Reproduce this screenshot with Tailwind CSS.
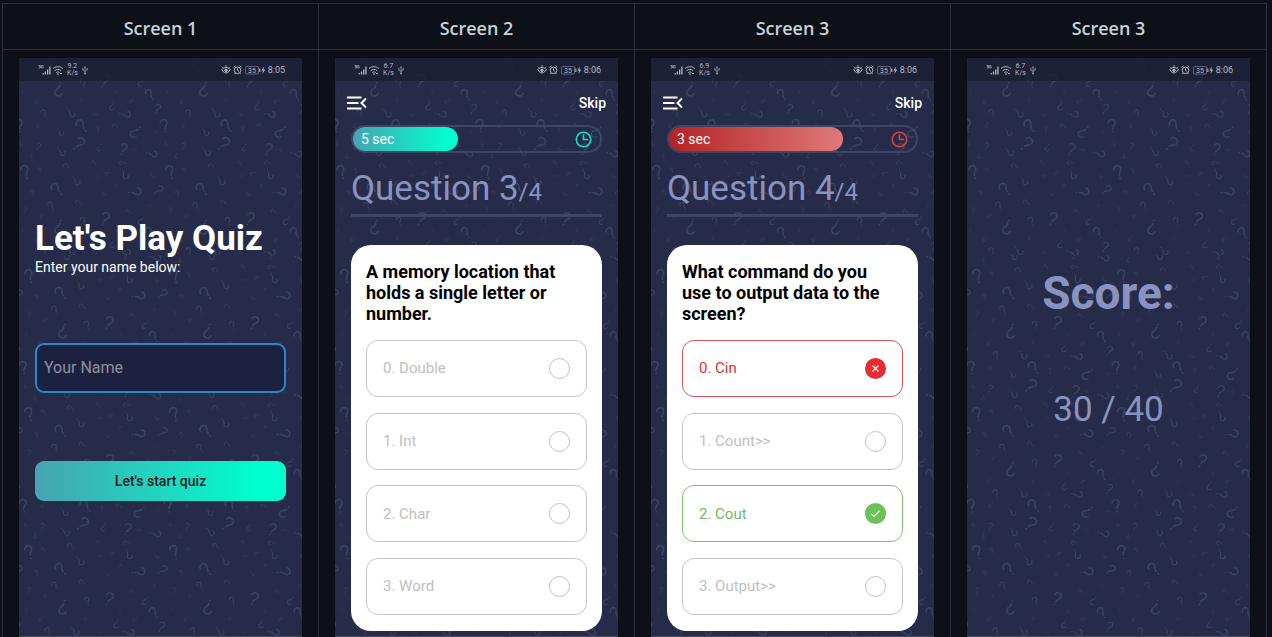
<!DOCTYPE html>
<html lang="en">
<head>
<meta charset="utf-8">
<title>Quiz app screens</title>
<script src="https://cdn.jsdelivr.net/npm/@tailwindcss/browser@4"></script>
</head>
<body class="bg-[#0d1117] pt-[3px] pr-[5px] pl-[2px] font-['Roboto',sans-serif]">

<!-- Shared symbols -->
<svg class="absolute size-0" aria-hidden="true">
  <defs>
    <path id="q" d="M-10,-11 C-7,-21 11,-20 10,-7 C9,1 -1,1 -3,10 M-5,18 l-0.5,1.5" fill="none" stroke="#3c4262" stroke-width="4.5" stroke-linecap="round"/>
    <g id="marks">
      <use href="#q" transform="translate(260,68) rotate(12)"/>
      <use href="#q" transform="translate(194,75) rotate(-30) scale(.65)"/>
      <use href="#q" transform="translate(119,94) rotate(182) scale(1.1)"/>
      <use href="#q" transform="translate(367,74) rotate(205) scale(.65)"/>
      <use href="#q" transform="translate(394,109) rotate(-45) scale(.9)"/>
      <use href="#q" transform="translate(337,130) rotate(225) scale(.4)"/>
      <use href="#q" transform="translate(417,152) rotate(12) scale(.75)"/>
      <use href="#q" transform="translate(280,144) rotate(185) scale(.65)"/>
      <use href="#q" transform="translate(54,129) rotate(205) scale(.4)"/>
      <use href="#q" transform="translate(76,166) rotate(-35) scale(.65)"/>
      <use href="#q" transform="translate(156,166) rotate(125) scale(.75)"/>
      <use href="#q" transform="translate(229,170) rotate(90) scale(.3)"/>
      <use href="#q" transform="translate(319,170) rotate(85) scale(.85)"/>
      <use href="#q" transform="translate(2,202) rotate(-20)"/>
      <use href="#q" transform="translate(438,202) rotate(-20)"/>
      <use href="#q" transform="translate(59,202) rotate(200) scale(.45)"/>
      <use href="#q" transform="translate(124,223) rotate(125) scale(.65)"/>
      <use href="#q" transform="translate(189,202) rotate(-50) scale(1.05)"/>
      <use href="#q" transform="translate(237,212) rotate(-10) scale(.45)"/>
      <use href="#q" transform="translate(289,204) rotate(-80) scale(.5)"/>
      <use href="#q" transform="translate(349,221) rotate(212)"/>
      <use href="#q" transform="translate(409,221) rotate(90) scale(.25)"/>
      <use href="#q" transform="translate(181,258) rotate(32) scale(1.1)"/>
      <use href="#q" transform="translate(6,259) rotate(150) scale(.35)"/>
      <use href="#q" transform="translate(59,265) rotate(5) scale(.55)"/>
      <use href="#q" transform="translate(241,269) rotate(190) scale(.55)"/>
      <use href="#q" transform="translate(315,273) rotate(10) scale(.9)"/>
      <use href="#q" transform="translate(347,275) rotate(85) scale(.35)"/>
      <use href="#q" transform="translate(399,288) rotate(88) scale(.85)"/>
      <use href="#q" transform="translate(127,282) rotate(120) scale(.75)"/>
      <use href="#q" transform="translate(37,294) rotate(170) scale(.4)"/>
      <use href="#q" transform="translate(226,314) rotate(-55) scale(.38)"/>
      <use href="#q" transform="translate(311,314) rotate(-100) scale(.5)"/>
      <use href="#q" transform="translate(144,324) rotate(-70) scale(.58)"/>
      <use href="#q" transform="translate(20,341) rotate(-28) scale(1.05)"/>
      <use href="#q" transform="translate(62,336) rotate(-40) scale(.4)"/>
      <use href="#q" transform="translate(317,350) rotate(140) scale(.75)"/>
      <use href="#q" transform="translate(266,346) rotate(232) scale(.42)"/>
      <use href="#q" transform="translate(232,354) rotate(80) scale(.25)"/>
      <use href="#q" transform="translate(171,369) rotate(130) scale(.75)"/>
      <use href="#q" transform="translate(402,355) rotate(130) scale(.4)"/>
      <use href="#q" transform="translate(291,383) rotate(20) scale(.28)"/>
      <use href="#q" transform="translate(114,392) rotate(-55) scale(1.05)"/>
      <use href="#q" transform="translate(41,406) rotate(-25) scale(.5)"/>
      <use href="#q" transform="translate(349,403) rotate(72)"/>
      <use href="#q" transform="translate(421,396) rotate(40) scale(.8)"/>
      <use href="#q" transform="translate(254,408) rotate(130) scale(.35)"/>
      <use href="#q" transform="translate(97,29) rotate(-45) scale(.65)"/>
      <use href="#q" transform="translate(179,19) rotate(-75) scale(.55)"/>
      <use href="#q" transform="translate(19,43) rotate(0) scale(.45)"/>
      <use href="#q" transform="translate(329,46) rotate(-75) scale(.42)"/>
      <use href="#q" transform="translate(395,29) rotate(20) scale(.2)"/>
      <use href="#q" transform="translate(67,60) rotate(220) scale(.3)"/>
      <use href="#q" transform="translate(10,103) rotate(0) scale(.2)"/>
      <use href="#q" transform="translate(292,105) rotate(0) scale(.22)"/>
      <use href="#q" transform="translate(186,129) rotate(10) scale(.25)"/>
    </g>
    <pattern id="tile" width="145" height="138" viewBox="0 0 436 414" preserveAspectRatio="none" patternUnits="userSpaceOnUse"><use href="#marks"/></pattern>
    <pattern id="tile-low" x="4" y="104" width="145" height="138" viewBox="0 0 436 414" preserveAspectRatio="none" patternUnits="userSpaceOnUse"><use href="#marks"/></pattern>
    <symbol id="backdrop">
      <rect width="100%" height="197" fill="url(#tile)"/>
      <rect y="197" width="100%" height="100%" fill="url(#tile-low)"/>
    </symbol>
    <symbol id="net" viewBox="0 0 26 12">
      <path d="M0.500 1.500h2v1.200h-1.200h1.200v1.200h-2M5.300 1.500h-1.700v2.400h1.700v-1.200h-.8" fill="none" stroke="#a9adba" stroke-width=".7"/>
      <path d="M5.300 10.500v-1.500M7.500 10.500v-3M9.700 10.500v-5M11.900 10.500v-8" stroke="#b4b7c2" stroke-width="1.300" fill="none"/>
      <path d="M15 4.500c2.800-2.400 7-2.400 9.800 0M16.600 6.600c2-1.600 4.600-1.600 6.600 0M18.200 8.500c1-.8 2.400-.8 3.400 0" fill="none" stroke="#b4b7c2" stroke-width="1"/>
      <path d="M19 10h2M22 9.500h2" stroke="#b4b7c2" stroke-width="1.200"/>
    </symbol>
    <symbol id="usb" viewBox="0 0 8 12">
      <path d="M4 3v7M1.800 5v1.200l2.200 1.300l2.200-1.300v-1.200" fill="none" stroke="#9397a6" stroke-width=".8"/>
      <path d="M2.900 3.500l1.100-1.800l1.100 1.800zM1.200 4.200h1.300v1.300h-1.300zM5.500 4.200h1.300v1.300h-1.300z" fill="#9397a6"/><circle cx="4" cy="9.500" r=".9" fill="#9397a6"/>
    </symbol>
    <symbol id="tray" viewBox="0 0 45 12">
      <g fill="none" stroke="#b4b7c2" stroke-width="1">
        <path d="M.8 5.500c2-2.600 6.400-2.600 8.400 0M.8 5.500c2 4.600 6.400 4.600 8.400 0M2 3.800l-1-1M8 3.800l1-1M5 3v-1.600"/><circle cx="5" cy="6.300" r="1.200" fill="#b4b7c2"/>
        <circle cx="16.500" cy="6.300" r="3.300"/><path d="M16.500 4.300v2.200l1.400.8M12.600 3.300l1.900-1.500M20.400 3.300l-1.900-1.500M14.200 9l-.8 1M18.800 9l.8 1"/>
        <rect x="24.500" y="2.500" width="13" height="7.500" rx="1" stroke="#7c8092" stroke-width=".7"/>
      </g>
      <path d="M38.200 4.500h1.200v3.500h-1.200zM43 2.500l-2.600 4h1.600l-.6 3.500l2.800-4.200h-1.700z" fill="#b4b7c2"/>
      <text x="27" y="9" font-size="7" fill="#b4b7c2">35</text>
    </symbol>
    <symbol id="menu" viewBox="0 0 20 14"><path d="M0 1.500h14.500M0 7h11.500M0 12.500h14.500M19 2.500l-4.500 4.500l4.500 4.500" fill="none" stroke="#fff" stroke-width="2"/></symbol>
    <symbol id="clock" viewBox="0 0 17 17"><circle cx="8.500" cy="8.500" r="7.200" fill="none" stroke="currentColor" stroke-width="1.600"/><path d="M8.500 3.500v5h4.500" fill="none" stroke="currentColor" stroke-width="1.600"/></symbol>
  </defs>
</svg>

<table class="w-full table-fixed border-collapse">
  <thead>
    <tr class="h-[46px] text-[18px] leading-6 text-[#c9d1d9] font-['Open_Sans',sans-serif]">
      <th scope="col" class="border border-[#2d3239] p-0 pt-[2px] font-semibold">Screen 1</th>
      <th scope="col" class="border border-[#2d3239] p-0 pt-[2px] font-semibold">Screen 2</th>
      <th scope="col" class="border border-[#2d3239] p-0 pt-[2px] font-semibold">Screen 3</th>
      <th scope="col" class="border border-[#2d3239] p-0 pt-[2px] font-semibold">Screen 3</th>
    </tr>
  </thead>
  <tbody>
    <tr class="align-top">

      <td class="border-x border-[#2d3239] px-4 pt-2 pb-0">
        <section class="relative isolate min-h-[579px] border-b border-[#454b62] bg-[#252b48]">
          <svg class="absolute inset-0 -z-10 size-full" aria-hidden="true"><use href="#backdrop"/></svg>
          <div class="flex h-[23px] items-center bg-[#1c2034]/85 pr-[17px] pl-[19px] text-[9px] leading-3 text-[#b4b7c2]">
            <svg class="h-3 w-[26px]"><use href="#net"/></svg>
            <span class="ml-[3px] text-center text-[7px] leading-[7px]">9.2<br>K/s</span>
            <svg class="ml-[3px] h-3 w-2"><use href="#usb"/></svg>
            <svg class="ml-auto h-3 w-[45px]"><use href="#tray"/></svg>
            <span class="ml-[2px]">8:05</span>
          </div>
          <div class="px-4">
            <h1 class="pt-[137px] text-[35px] leading-[41px] font-bold text-white">Let's Play Quiz</h1>
            <label for="name" class="block text-[14px] leading-4 text-white">Enter your name below:</label>
            <input id="name" type="text" placeholder="Your Name" class="mt-[68px] block h-[50px] w-full rounded-[9px] border-2 border-[#2a86d0] bg-[#1c2140] px-[7px] pb-[2px] text-[16px] text-white placeholder:text-[#8e91a1]">
            <button class="mt-[68px] block h-10 w-full rounded-[9px] bg-linear-to-r/srgb from-[#48a3b0] to-[#00ffce] to-90% text-[14px] font-medium text-[#0b1a1c]">Let's start quiz</button>
          </div>
        </section>
      </td>

      <td class="border-x border-[#2d3239] px-4 pt-2 pb-0">
        <section class="relative isolate min-h-[579px] border-b border-[#454b62] bg-[#252b48]">
          <svg class="absolute inset-0 -z-10 size-full" aria-hidden="true"><use href="#backdrop"/></svg>
          <div class="flex h-[23px] items-center bg-[#1c2034]/85 pr-[17px] pl-[19px] text-[9px] leading-3 text-[#b4b7c2]">
            <svg class="h-3 w-[26px]"><use href="#net"/></svg>
            <span class="ml-[3px] text-center text-[7px] leading-[7px]">6.7<br>K/s</span>
            <svg class="ml-[3px] h-3 w-2"><use href="#usb"/></svg>
            <svg class="ml-auto h-3 w-[45px]"><use href="#tray"/></svg>
            <span class="ml-[2px]">8:06</span>
          </div>
          <div class="flex h-11 items-center justify-between pr-3 pl-3">
            <button aria-label="Menu"><svg class="h-[14px] w-5"><use href="#menu"/></svg></button>
            <button class="text-[14px] font-medium text-white">Skip</button>
          </div>
          <div class="px-4">
            <div class="flex h-7 items-center justify-between rounded-full border-2 border-[#3f4565] pr-2">
              <div class="flex h-6 items-center rounded-full bg-linear-to-r/srgb from-[#48a3b0] to-[#00ffce] to-90% pl-2 text-[14px] text-white" style="width:44%">5 sec</div>
              <svg class="size-[17px] text-[#14e0c0]"><use href="#clock"/></svg>
            </div>
            <h2 class="border-b-[3px] border-[#3f4565] pt-[15px] pb-px text-[35px] leading-[42px] text-[#8a93c0]">Question 3<span class="text-[24px]">/4</span></h2>
            <form class="mt-7 rounded-[20px] bg-white px-[15px] py-4">
              <fieldset>
                <legend class="pr-4 text-[18px] leading-[21px] font-bold text-black">A memory location that holds a single letter or number.</legend>
                <div class="mt-4 flex h-[275px] flex-col justify-between text-[15px] text-[#c0c0c0]">
                  <label class="flex h-[57px] items-center justify-between rounded-xl border border-[#c6c6c6] px-4">0. Double<input type="radio" name="a" class="size-[21px] appearance-none rounded-full border border-[#c0c0c0]"></label>
                  <label class="flex h-[57px] items-center justify-between rounded-xl border border-[#c6c6c6] px-4">1. Int<input type="radio" name="a" class="size-[21px] appearance-none rounded-full border border-[#c0c0c0]"></label>
                  <label class="flex h-[57px] items-center justify-between rounded-xl border border-[#c6c6c6] px-4">2. Char<input type="radio" name="a" class="size-[21px] appearance-none rounded-full border border-[#c0c0c0]"></label>
                  <label class="flex h-[57px] items-center justify-between rounded-xl border border-[#c6c6c6] px-4">3. Word<input type="radio" name="a" class="size-[21px] appearance-none rounded-full border border-[#c0c0c0]"></label>
                </div>
              </fieldset>
            </form>
          </div>
        </section>
      </td>

      <td class="border-x border-[#2d3239] px-4 pt-2 pb-0">
        <section class="relative isolate min-h-[579px] border-b border-[#454b62] bg-[#252b48]">
          <svg class="absolute inset-0 -z-10 size-full" aria-hidden="true"><use href="#backdrop"/></svg>
          <div class="flex h-[23px] items-center bg-[#1c2034]/85 pr-[17px] pl-[19px] text-[9px] leading-3 text-[#b4b7c2]">
            <svg class="h-3 w-[26px]"><use href="#net"/></svg>
            <span class="ml-[3px] text-center text-[7px] leading-[7px]">6.9<br>K/s</span>
            <svg class="ml-[3px] h-3 w-2"><use href="#usb"/></svg>
            <svg class="ml-auto h-3 w-[45px]"><use href="#tray"/></svg>
            <span class="ml-[2px]">8:06</span>
          </div>
          <div class="flex h-11 items-center justify-between pr-3 pl-3">
            <button aria-label="Menu"><svg class="h-[14px] w-5"><use href="#menu"/></svg></button>
            <button class="text-[14px] font-medium text-white">Skip</button>
          </div>
          <div class="px-4">
            <div class="flex h-7 items-center justify-between rounded-full border-2 border-[#3f4565] pr-2">
              <div class="flex h-6 items-center rounded-full bg-linear-to-r/srgb from-[#b42323] to-[#df7979] pl-2 text-[14px] text-white" style="width:73%">3 sec</div>
              <svg class="size-[17px] text-[#dc4040]"><use href="#clock"/></svg>
            </div>
            <h2 class="border-b-[3px] border-[#3f4565] pt-[15px] pb-px text-[35px] leading-[42px] text-[#8a93c0]">Question 4<span class="text-[24px]">/4</span></h2>
            <form class="mt-7 rounded-[20px] bg-white px-[15px] py-4">
              <fieldset>
                <legend class="pr-4 text-[18px] leading-[21px] font-bold text-black">What command do you use to output data to the screen?</legend>
                <div class="mt-4 flex h-[275px] flex-col justify-between text-[15px] text-[#c0c0c0]">
                  <label class="flex h-[57px] items-center justify-between rounded-xl border border-[#dd5252] px-4 text-[#dc3333]">0. Cin
                    <span class="relative flex"><input type="radio" name="b" class="size-[21px] appearance-none rounded-full bg-[#e82c2f]"><svg viewBox="0 0 21 21" class="pointer-events-none absolute inset-0 size-[21px]"><path d="M7.500 7.500l6 6M13.500 7.500l-6 6" stroke="#fff" stroke-width="1.200"/></svg></span></label>
                  <label class="flex h-[57px] items-center justify-between rounded-xl border border-[#c6c6c6] px-4">1. Count&gt;&gt;<input type="radio" name="b" class="size-[21px] appearance-none rounded-full border border-[#c0c0c0]"></label>
                  <label class="flex h-[57px] items-center justify-between rounded-xl border border-[#7cc56e] px-4 text-[#6abf59]">2. Cout
                    <span class="relative flex"><input type="radio" name="b" checked class="size-[21px] appearance-none rounded-full bg-[#6ac259]"><svg viewBox="0 0 21 21" class="pointer-events-none absolute inset-0 size-[21px]"><path d="M6.500 10.800l2.600 2.700l5.400-5.800" fill="none" stroke="#fff" stroke-width="1.200"/></svg></span></label>
                  <label class="flex h-[57px] items-center justify-between rounded-xl border border-[#c6c6c6] px-4">3. Output&gt;&gt;<input type="radio" name="b" class="size-[21px] appearance-none rounded-full border border-[#c0c0c0]"></label>
                </div>
              </fieldset>
            </form>
          </div>
        </section>
      </td>

      <td class="border-x border-[#2d3239] px-4 pt-2 pb-0">
        <section class="relative isolate min-h-[579px] border-b border-[#454b62] bg-[#252b48]">
          <svg class="absolute inset-0 -z-10 size-full" aria-hidden="true"><use href="#backdrop"/></svg>
          <div class="flex h-[23px] items-center bg-[#1c2034]/85 pr-[17px] pl-[19px] text-[9px] leading-3 text-[#b4b7c2]">
            <svg class="h-3 w-[26px]"><use href="#net"/></svg>
            <span class="ml-[3px] text-center text-[7px] leading-[7px]">6.7<br>K/s</span>
            <svg class="ml-[3px] h-3 w-2"><use href="#usb"/></svg>
            <svg class="ml-auto h-3 w-[45px]"><use href="#tray"/></svg>
            <span class="ml-[2px]">8:06</span>
          </div>
          <div class="pt-[184px] text-center text-[#8a93c0]">
            <h2 class="text-[46px] leading-[56px] font-bold">Score:</h2>
            <p class="mt-[68px] text-[35px] leading-[42px]">30 / 40</p>
          </div>
        </section>
      </td>
    </tr>
  </tbody>
</table>
</body>
</html>
